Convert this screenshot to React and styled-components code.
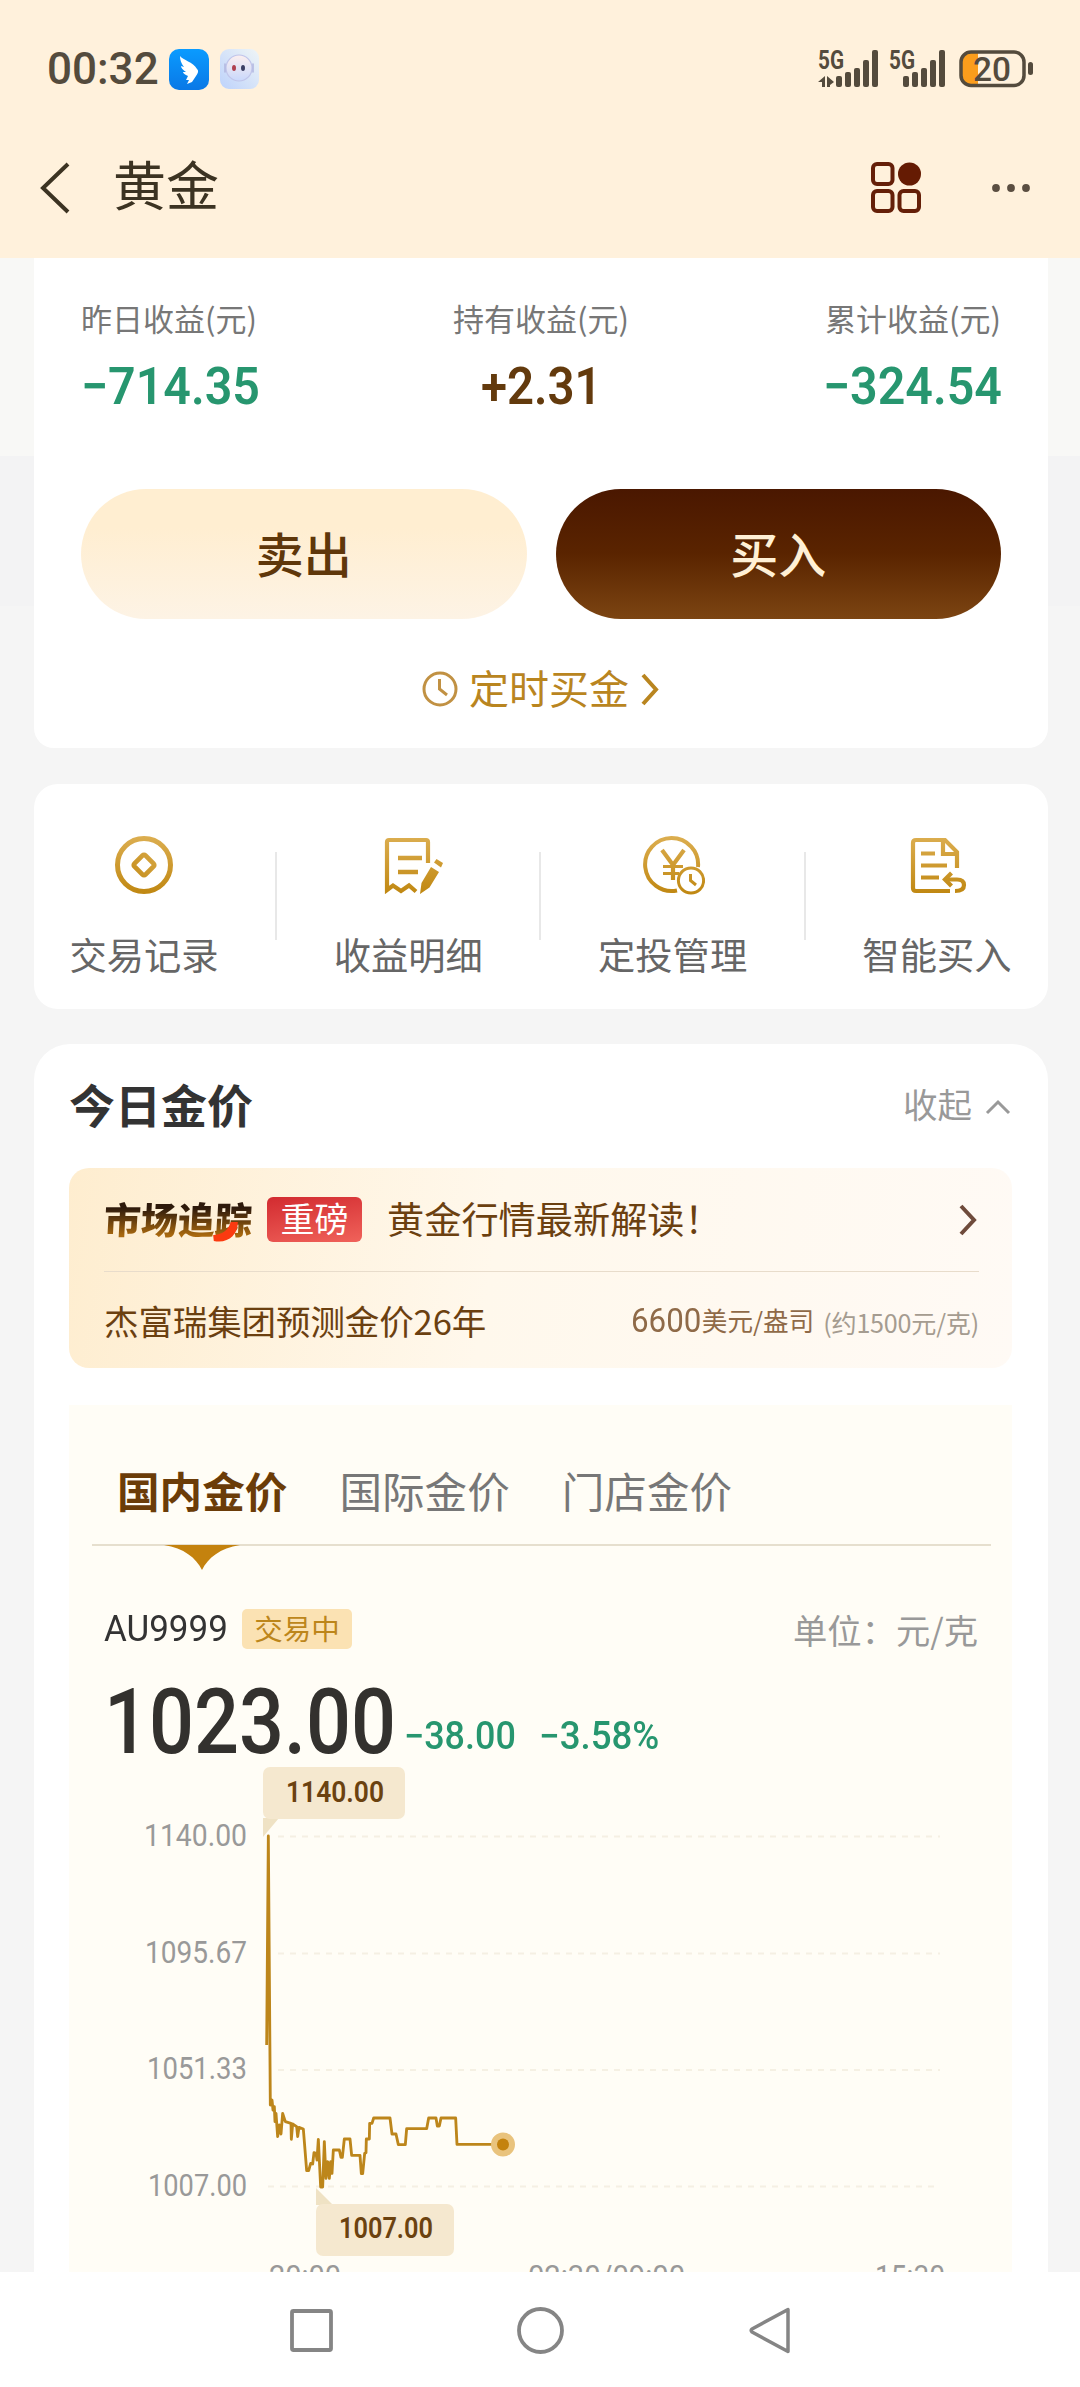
import React from 'react'
import styled, { createGlobalStyle } from 'styled-components'

const actions = [
  { label: '交易记录', Icon: CoinIcon },
  { label: '收益明细', Icon: ReceiptIcon },
  { label: '定投管理', Icon: PlanIcon },
  { label: '智能买入', Icon: SmartBuyIcon },
]

const gridLines = [
  { label: '1140.00', y: 1836.5, width: 103 },
  { label: '1095.67', y: 1953.5, width: 102 },
  { label: '1051.33', y: 2070, width: 100 },
  { label: '1007.00', y: 2186.5, width: 99 },
]

const timeLabels = [
  { label: '20:00', x: 269, width: 72 },
  { label: '02:30/09:00', x: 528, width: 157 },
  { label: '15:30', x: 875, width: 70 },
]

const pricePoints =
  '80,855 85,228 91,1035 96,1020 99,1050 103,1040 105,1085 108,1060 113,1130 118,1095 123,1122 128,1060 136,1085 153,1090 154,1138 158,1092 170,1100 173,1130 177,1102 190,1107 200,1232 206,1232 212,1210 218,1212 222,1178 228,1180 231,1200 235,1138 242,1281 248,1281 253,1145 258,1255 263,1205 268,1255 272,1205 276,1240 280,1170 298,1170 303,1192 307,1192 313,1137 330,1137 335,1186 360,1186 364,1241 368,1241 374,1180 378,1178 379,1137 388,1137 389,1090 396,1090 401,1074 450,1074 456,1122 468,1122 475,1154 496,1154 500,1106 560,1106 566,1074 588,1074 592,1098 598,1098 603,1074 647,1074 651,1153 787,1153'

export default function App() {
  return (
    <Phone>
      <GlobalStyle />
      <StatusBar>
        <StatusGroup>
          <Clock>00:32</Clock>
          <WingAppIcon />
          <RobotAppIcon />
        </StatusGroup>
        <StatusIcons />
      </StatusBar>
      <Header>
        <BackIcon />
        <PageTitle>黄金</PageTitle>
        <GridIcon />
        <MoreIcon />
      </Header>

      <Content>
        <SummaryCard>
          <Stats>
            <Stat $align="flex-start">
              <StatLabel>昨日收益(元)</StatLabel>
              <Figure size={52} weight={600} width={178} squeeze={0.93} color="#27966f">
                −714.35
              </Figure>
            </Stat>
            <Stat $align="center">
              <StatLabel>持有收益(元)</StatLabel>
              <Figure size={52} weight={600} width={121} squeeze={0.91} color="#633a0d">
                +2.31
              </Figure>
            </Stat>
            <Stat $align="flex-end">
              <StatLabel>累计收益(元)</StatLabel>
              <Figure size={52} weight={600} width={178} squeeze={0.93} color="#27966f">
                −324.54
              </Figure>
            </Stat>
          </Stats>
          <Buttons>
            <SellButton>卖出</SellButton>
            <BuyButton>买入</BuyButton>
          </Buttons>
          <TimedLink>
            <ClockIcon />
            定时买金
            <svg width="20" height="33" viewBox="0 0 20 33" fill="none" stroke="#b9851f" strokeWidth="4">
              <path d="M3 2 L16 16.500 L3 31" />
            </svg>
          </TimedLink>
        </SummaryCard>

        <ActionCard>
          {actions.map(({ label, Icon }, index) => (
            <React.Fragment key={label}>
              {index > 0 && <Divider />}
              <Action>
                <Icon />
                <ActionLabel>{label}</ActionLabel>
              </Action>
            </React.Fragment>
          ))}
        </ActionCard>

        <PriceCard>
          <CardHead>
            <CardTitle>今日金价</CardTitle>
            <Collapse>
              收起
              <svg width="26" height="16" viewBox="0 0 26 16" fill="none" stroke="#999" strokeWidth="3">
                <path d="M2 14 L13 3 L24 14" />
              </svg>
            </Collapse>
          </CardHead>

          <Banner>
            <BannerTop>
              <TrackLogo>
                市场追踪
                <Swoosh width="25" height="20" viewBox="0 0 25 20">
                  <path d="M0 13 C9 13 15 8 17 0 H24 C25 13 15 22 1 19 Z" fill="#fb3a10" />
                </Swoosh>
              </TrackLogo>
              <HotTag>重磅</HotTag>
              <BannerTitle>黄金行情最新解读！</BannerTitle>
              <svg width="18" height="34" viewBox="0 0 18 34" fill="none" stroke="#6f4b3b" strokeWidth="4">
                <path d="M2 3 L15 17 L2 31" />
              </svg>
            </BannerTop>
            <BannerBottom>
              <Forecast>杰富瑞集团预测金价26年</Forecast>
              <Target>
                <Figure size={34} weight={400} width={71} squeeze={0.92} color="#8f6a48">
                  6600
                </Figure>
                <TargetUnit>美元/盎司</TargetUnit>
                <Approx>(约1500元/克)</Approx>
              </Target>
            </BannerBottom>
          </Banner>

          <Panel>
            <Tabs>
              <Tab $active>
                国内金价
                <TabMark width="76" height="25" viewBox="0 0 76 25">
                  <path d="M0 0 H76 C56 3 44 13 38 25 C32 13 20 3 0 0 Z" fill="#c4820e" />
                </TabMark>
              </Tab>
              <Tab>国际金价</Tab>
              <Tab>门店金价</Tab>
            </Tabs>
            <QuoteRow>
              <Figure size={37} weight={400} width={138} squeeze={0.945} color="#333">
                AU9999
              </Figure>
              <TradingTag>交易中</TradingTag>
              <Unit>单位：元/克</Unit>
            </QuoteRow>
            <PriceRow>
              <Figure size={91} weight={500} width={300} squeeze={0.87} color="#33312e" height={88}>
                1023.00
              </Figure>
              <Figure size={38} weight={500} width={135} squeeze={0.945} color="#27966f">
                −38.00
              </Figure>
              <Figure size={38} weight={500} width={122} squeeze={0.965} color="#27966f">
                −3.58%
              </Figure>
            </PriceRow>
            <PriceChart />
          </Panel>
        </PriceCard>
      </Content>

      <NavBar>
        <NavIcons />
      </NavBar>
    </Phone>
  )
}

function Figure({ size, weight, width, squeeze, color, height = 60, children }) {
  return (
    <FigureBox $width={width} $height={height}>
      <FigureText $size={size} $weight={weight} $squeeze={squeeze} $color={color}>
        {children}
      </FigureText>
    </FigureBox>
  )
}

function PriceChart() {
  return (
    <ChartSvg viewBox="69 1766 943 506" width="943" height="506">
      {gridLines.map(({ label, y, width }, index) => (
        <g key={label}>
          <line x1={index === 3 ? 268 : 278} x2="940" y1={y} y2={y} stroke="#f5f0e3" strokeWidth="2" strokeDasharray="6 6" />
          <text x={247 - width} y={y + 9} fontSize="31.500" fill="#999" textLength={width} lengthAdjust="spacingAndGlyphs">
            {label}
          </text>
        </g>
      ))}

      <path d="M263 1818 H279 L263 1837 Z" fill="#efe2c4" />
      <rect x="263" y="1767" width="142" height="52" rx="7" fill="#f5e8cf" />
      <text x="286" y="1801.500" fontSize="29" fontWeight="600" fill="#6b4210" textLength="98" lengthAdjust="spacingAndGlyphs">
        1140.00
      </text>

      <path d="M316 2188 L333 2205 H316 Z" fill="#efe2c4" />
      <rect x="316" y="2204" width="138" height="52" rx="7" fill="#f5e8cf" />
      <text x="339" y="2238" fontSize="29" fontWeight="600" fill="#6b4210" textLength="94" lengthAdjust="spacingAndGlyphs">
        1007.00
      </text>

      <g transform="translate(240 1760) scale(0.33333)">
        <polyline points={pricePoints} fill="none" stroke="#bd861b" strokeWidth="8.500" strokeLinejoin="round" />
      </g>
      <circle cx="503" cy="2144.500" r="12" fill="#e9c37d" />
      <circle cx="503" cy="2144.500" r="6" fill="#c4820e" />

      {timeLabels.map(({ label, x, width }) => (
        <text key={label} x={x} y="2287" fontSize="31" fill="#999" textLength={width} lengthAdjust="spacingAndGlyphs">
          {label}
        </text>
      ))}
    </ChartSvg>
  )
}

function WingAppIcon() {
  return (
    <svg width="40" height="41" viewBox="0 0 40 41">
      <defs>
        <linearGradient id="wing" x1="0" y1="0" x2="0" y2="1">
          <stop offset="0" stopColor="#0a9bff" />
          <stop offset="1" stopColor="#0a78e6" />
        </linearGradient>
      </defs>
      <rect width="40" height="41" rx="10" fill="url(#wing)" />
      <path
        d="M11 7 C14 11 24 13 28 20 C30 22 29 24 27 27 L23 33 L18 35 L20 31 L17 31 L19 27 C16 26 14 24 14 23 L17 23 C14 21 12 19 12 17 L15 18 C12 14 11 11 11 7 Z"
        fill="#fff"
      />
    </svg>
  )
}

function RobotAppIcon() {
  return (
    <svg width="39" height="40" viewBox="0 0 39 40">
      <defs>
        <linearGradient id="robot" x1="1" y1="0" x2="0" y2="1">
          <stop offset="0" stopColor="#eff5f6" />
          <stop offset="1" stopColor="#bdd2fb" />
        </linearGradient>
        <linearGradient id="face" x1="0" y1="0" x2="0" y2="1">
          <stop offset="0" stopColor="#fcefef" />
          <stop offset="1" stopColor="#c9d8fc" />
        </linearGradient>
      </defs>
      <rect width="39" height="40" rx="9" fill="url(#robot)" />
      <circle cx="19" cy="19" r="13" fill="url(#face)" stroke="#c0c5ea" strokeWidth="1.200" />
      <path d="M5 15 V23 M33 15 V23" stroke="#b3b8e0" strokeWidth="1.600" strokeLinecap="round" />
      <ellipse cx="14" cy="19" rx="2" ry="3" fill="#b0414f" />
      <ellipse cx="23" cy="19" rx="2" ry="3" fill="#3c3f63" />
    </svg>
  )
}

function StatusIcons() {
  return (
    <svg width="220" height="64" viewBox="817 37 220 64" fill="#544b3d">
      <text x="819" y="69" fontSize="26" fontWeight="700" textLength="26" lengthAdjust="spacingAndGlyphs">
        5G
      </text>
      <text x="890" y="69" fontSize="26" fontWeight="700" textLength="26" lengthAdjust="spacingAndGlyphs">
        5G
      </text>
      <path d="M819 82 L826 76 V87 H823 V82 Z M828 76 L835 82 L831 85 V87 H828 Z" />
      {[837, 904].map((x) => (
        <g key={x}>
          <rect x={x} y="76" width="6" height="11" rx="2" />
          <rect x={x + 9} y="72" width="6" height="15" rx="2" />
          <rect x={x + 18} y="68" width="6" height="19" rx="2" />
          <rect x={x + 27} y="60" width="6" height="27" rx="2" />
          <rect x={x + 36} y="50" width="6" height="37" rx="2" />
        </g>
      ))}
      <path d="M979 53 H972 Q963 53 963 62 V75 Q963 85 972 85 H979 Z" fill="#fb9d1c" />
      <rect x="962" y="52" width="63" height="33.500" rx="10" fill="none" stroke="#544b3d" strokeWidth="3.500" />
      <rect x="1029" y="62" width="5" height="13" rx="2.500" />
      <text x="974" y="80.500" fontSize="33.500" fontWeight="500" textLength="38" lengthAdjust="spacingAndGlyphs">
        20
      </text>
    </svg>
  )
}

function BackIcon() {
  return (
    <svg width="32" height="52" viewBox="0 0 32 52" fill="none" stroke="#3c3322" strokeWidth="4">
      <path d="M29 2 L4 26 L29 50" />
    </svg>
  )
}

function GridIcon() {
  return (
    <svg width="50" height="51" viewBox="0 0 50 51" fill="none" stroke="#651f08" strokeWidth="4">
      <rect x="2" y="2" width="19.500" height="20" rx="4" />
      <rect x="2" y="29" width="19.500" height="20" rx="4" />
      <rect x="28.500" y="29" width="19.500" height="20" rx="4" />
      <circle cx="38.500" cy="12" r="11.500" fill="#651b03" stroke="none" />
    </svg>
  )
}

function MoreIcon() {
  return (
    <svg width="38" height="8" viewBox="0 0 38 8" fill="#5b4e41">
      <circle cx="4" cy="4" r="3.900" />
      <circle cx="19" cy="4" r="3.900" />
      <circle cx="34" cy="4" r="3.900" />
    </svg>
  )
}

function ClockIcon() {
  return (
    <svg width="36" height="36" viewBox="0 0 36 36" fill="none" stroke="#c19143" strokeWidth="3">
      <circle cx="18" cy="18" r="16" />
      <path d="M17.500 8 V18 L25 24" />
    </svg>
  )
}

function GoldGradient({ id }) {
  return (
    <defs>
      <linearGradient id={id} x1="0" y1="0" x2="0" y2="60" gradientUnits="userSpaceOnUse">
        <stop offset="0" stopColor="#dcae50" />
        <stop offset="1" stopColor="#bf860f" />
      </linearGradient>
    </defs>
  )
}

function CoinIcon() {
  return (
    <svg width="60" height="60" viewBox="0 0 60 60" fill="none" stroke="url(#coin)" strokeWidth="5">
      <GoldGradient id="coin" />
      <circle cx="30" cy="29" r="26.500" />
      <rect x="22.200" y="21.200" width="15.600" height="15.600" rx="2" strokeWidth="4.800" transform="rotate(45 30 29)" />
    </svg>
  )
}

function ReceiptIcon() {
  return (
    <svg width="72" height="60" viewBox="-12 0 72 60" fill="none" stroke="url(#receipt)" strokeWidth="4.200">
      <GoldGradient id="receipt" />
      <path d="M44 27 V6 Q44 4 42 4 H5 Q3 4 3 6 V54 L9 49.500 L17 55 L25 49.500 L32 55.500" />
      <path d="M14 22 H38 M14 36 H34" strokeWidth="4.400" />
      <path d="M36 58 L37.500 47 L47 31 L55 36 L45.500 51.500 Z M50 26.500 L52.500 23 L59 27 L57 31.500 Z" fill="url(#receipt)" stroke="none" />
    </svg>
  )
}

function PlanIcon() {
  return (
    <svg width="64" height="60" viewBox="0 0 64 60" fill="none" stroke="url(#plan)" strokeWidth="4">
      <GoldGradient id="plan" />
      <path d="M57 31 A26.500 26.500 0 1 0 36 54.500" />
      <path d="M21 14 L32 29 L43 14 M32 28 V44" strokeWidth="4.200" />
      <path d="M22 30.500 H42 M22 37.500 H38" strokeWidth="3" />
      <circle cx="50" cy="44.500" r="12.600" strokeWidth="3" />
      <path d="M49.500 38 V44.500 L55 49" strokeWidth="3" />
    </svg>
  )
}

function SmartBuyIcon() {
  return (
    <svg width="60" height="60" viewBox="-1 0 60 60" fill="none" stroke="url(#smart)" strokeWidth="4.200">
      <GoldGradient id="smart" />
      <path d="M49 32 V16 L37 4 H8 Q5 4 5 7 V52 Q5 55 8 55 H42" />
      <path d="M35 4 V18 H49" />
      <path d="M13 17.500 H27 M13 29.500 H39 M13 41.500 H31" />
      <path d="M37 43.500 H49 Q56 43.500 56 49 Q56 55 47 55" />
      <path d="M43.500 37 L37 43.500 L43.500 50" />
    </svg>
  )
}

function NavIcons() {
  return (
    <svg width="504" height="50" viewBox="287 2304 504 50" fill="none" stroke="#858585" strokeWidth="3.800">
      <rect x="291" y="2310" width="39" height="39" rx="1.500" />
      <circle cx="539.500" cy="2329.500" r="21.500" />
      <path d="M787 2308.500 V2350.500 L751 2331 Q749.500 2329.500 751 2328 Z" strokeLinejoin="round" strokeWidth="3.500" />
    </svg>
  )
}

const GlobalStyle = createGlobalStyle`
  * {
    box-sizing: border-box;
  }

  body {
    margin: 0;
    background: #f5f5f5;
    font-family: 'Noto Sans CJK SC', sans-serif;
  }

  svg {
    display: block;
    flex-shrink: 0;
  }

  svg text {
    font-family: Roboto, sans-serif;
  }
`

const Phone = styled.div`
  display: flex;
  flex-direction: column;
  width: 1080px;
  height: 2387px;
  overflow: hidden;
  background: #f5f5f5;
`

const StatusBar = styled.div`
  display: flex;
  justify-content: space-between;
  align-items: center;
  height: 138px;
  padding: 0 44px 0 47px;
  background: #fff1dc;
`

const StatusGroup = styled.div`
  display: flex;
  align-items: center;
  gap: 11px;
`

const Clock = styled.span`
  width: 111px;
  font-family: Roboto, sans-serif;
  font-size: 44px;
  font-weight: 500;
  line-height: 50px;
  color: #544b3d;
`

const Header = styled.header`
  display: flex;
  align-items: center;
  height: 120px;
  padding: 0 50px 21px 39px;
  background: #fff1dc;

  svg:nth-of-type(2) {
    margin-left: auto;
    margin-right: 71px;
  }
`

const PageTitle = styled.h1`
  margin: -10px 0 0 42px;
  font-size: 53px;
  font-weight: 400;
  line-height: 60px;
  color: #3c3322;
`

const Content = styled.main`
  flex: 1;
  min-height: 0;
  overflow: hidden;
  padding: 0 32px 0 34px;
  background: linear-gradient(#f8f8f6 198px, #f3f3f4 198px, #f3f3f4 348px, #f5f5f5 348px);
`

const SummaryCard = styled.section`
  height: 490px;
  padding: 40px 47px 0 47px;
  border-radius: 0 0 20px 20px;
  background: #fff;
`

const Stats = styled.div`
  display: flex;
  justify-content: space-between;
`

const Stat = styled.div`
  display: flex;
  flex-direction: column;
  align-items: ${({ $align }) => $align};
`

const StatLabel = styled.span`
  margin-bottom: 19px;
  font-size: 31px;
  line-height: 40px;
  color: #777;
`

const FigureBox = styled.span`
  display: block;
  flex-shrink: 0;
  width: ${({ $width }) => $width}px;
  height: ${({ $height }) => $height}px;
  line-height: ${({ $height }) => $height}px;
`

const FigureText = styled.span`
  display: inline-block;
  font-family: Roboto, sans-serif;
  font-size: ${({ $size }) => $size}px;
  font-weight: ${({ $weight }) => $weight};
  white-space: nowrap;
  color: ${({ $color }) => $color};
  transform: scaleX(${({ $squeeze }) => $squeeze});
  transform-origin: left center;
`

const Buttons = styled.div`
  display: flex;
  gap: 29px;
  margin-top: 72px;
`

const PillButton = styled.button`
  flex: 1;
  height: 130px;
  padding: 0 0 4px;
  border: none;
  border-radius: 65px;
  font-family: inherit;
  font-size: 48px;
  font-weight: 500;
`

const SellButton = styled(PillButton)`
  color: #5f370a;
  background: linear-gradient(#ffeed1 30%, #fdf3e5);
`

const BuyButton = styled(PillButton)`
  color: #fff0d5;
  background: linear-gradient(#4a1700, #5a2400 50%, #7c4512);
`

const TimedLink = styled.div`
  display: flex;
  justify-content: center;
  align-items: center;
  gap: 11px;
  margin-top: 43px;
  font-size: 40px;
  line-height: 50px;
  color: #b9851f;

  svg {
    margin-top: 4px;
  }
`

const ActionCard = styled.section`
  display: flex;
  justify-content: space-between;
  height: 225px;
  margin-top: 36px;
  padding: 52px 36px 0 35px;
  border-radius: 24px;
  background: #fff;
`

const Action = styled.div`
  display: flex;
  flex-direction: column;
  align-items: center;
  width: 150px;
`

const ActionLabel = styled.span`
  margin-top: 38px;
  font-size: 37.3px;
  line-height: 40px;
  white-space: nowrap;
  color: #666;
`

const Divider = styled.i`
  width: 2px;
  height: 88px;
  margin-top: 16px;
  background: #e8e8e8;
`

const PriceCard = styled.section`
  margin-top: 35px;
  padding: 29px 36px 0 35px;
  border-radius: 36px 36px 0 0;
  background: #fff;
`

const CardHead = styled.div`
  display: flex;
  justify-content: space-between;
  align-items: center;
  height: 60px;
`

const CardTitle = styled.h2`
  margin: 0;
  font-size: 46px;
  font-weight: 700;
  line-height: 60px;
  color: #333;
`

const Collapse = styled.span`
  display: flex;
  align-items: center;
  gap: 13px;
  margin-right: 1px;
  font-size: 34.5px;
  line-height: 60px;
  color: #999;

  svg {
    margin-top: 8px;
  }
`

const Banner = styled.div`
  height: 200px;
  margin-top: 35px;
  padding: 0 33px 0 35px;
  border-radius: 20px;
  background: linear-gradient(100deg, #feedcf, #fff8ec 45%, #fffaf5);
`

const BannerTop = styled.div`
  display: flex;
  align-items: center;
  height: 104px;
  border-bottom: 1px solid #e8dccb;

  > svg {
    margin-left: auto;
    margin-right: 2px;
  }
`

const TrackLogo = styled.span`
  position: relative;
  width: 148px;
  margin-top: -4px;
  font-size: 37px;
  font-weight: 900;
  line-height: 50px;
  white-space: nowrap;
  color: transparent;
  background: linear-gradient(#2e1a0c 30%, #a9690f 85%);
  background-clip: text;
  transform: skewX(-3deg);
`

const Swoosh = styled.svg`
  position: absolute;
  left: 110px;
  top: 29px;
`

const HotTag = styled.span`
  width: 95px;
  height: 45px;
  margin-left: 15px;
  border-radius: 6px;
  font-size: 34px;
  line-height: 42px;
  text-align: center;
  color: #fff;
  background: linear-gradient(170deg, #d22b30, #f0625a);
`

const BannerTitle = styled.span`
  margin: -3px 0 0 25px;
  font-size: 37.2px;
  line-height: 50px;
  color: #6b4010;
`

const BannerBottom = styled.div`
  display: flex;
  justify-content: space-between;
  align-items: center;
  height: 95px;
`

const Forecast = styled.span`
  font-size: 34.5px;
  line-height: 50px;
  letter-spacing: -0.1px;
  color: #6b4010;
`

const Target = styled.span`
  display: flex;
  align-items: center;
`

const TargetUnit = styled.span`
  margin-right: 9px;
  font-size: 25.6px;
  color: #8f6a48;
`

const Approx = styled.span`
  padding-top: 4px;
  font-size: 25.1px;
  letter-spacing: -0.2px;
  color: #a59c90;
`

const Panel = styled.div`
  margin-top: 37px;
  background: #fffdf6;
`

const Tabs = styled.div`
  display: flex;
  gap: 52px;
  height: 141px;
  margin: 0 21px 0 23px;
  padding: 31px 0 0 25px;
  border-bottom: 2px solid #e6dfce;
`

const Tab = styled.span`
  position: relative;
  font-size: 42.6px;
  font-weight: ${({ $active }) => ($active ? 700 : 400)};
  line-height: 108px;
  color: ${({ $active }) => ($active ? '#6b3c08' : '#777')};
`

const TabMark = styled.svg`
  position: absolute;
  left: 47px;
  top: 109px;
`

const QuoteRow = styled.div`
  display: flex;
  align-items: center;
  height: 40px;
  margin-top: 63px;
  padding: 0 34px 0 35px;
`

const TradingTag = styled.span`
  width: 110px;
  height: 40px;
  border-radius: 5px;
  font-size: 28.5px;
  line-height: 37px;
  text-align: center;
  color: #bd861b;
  background: #fbe2b3;
`

const Unit = styled.span`
  margin-left: auto;
  font-size: 34.3px;
  line-height: 40px;
  color: #999;
`

const PriceRow = styled.div`
  display: flex;
  align-items: flex-end;
  height: 117px;
  padding-left: 35px;
`

const ChartSvg = styled.svg`
  width: 943px;
  height: 506px;
`

const NavBar = styled.nav`
  display: flex;
  align-items: center;
  justify-content: center;
  height: 115px;
  background: #fff;
`
